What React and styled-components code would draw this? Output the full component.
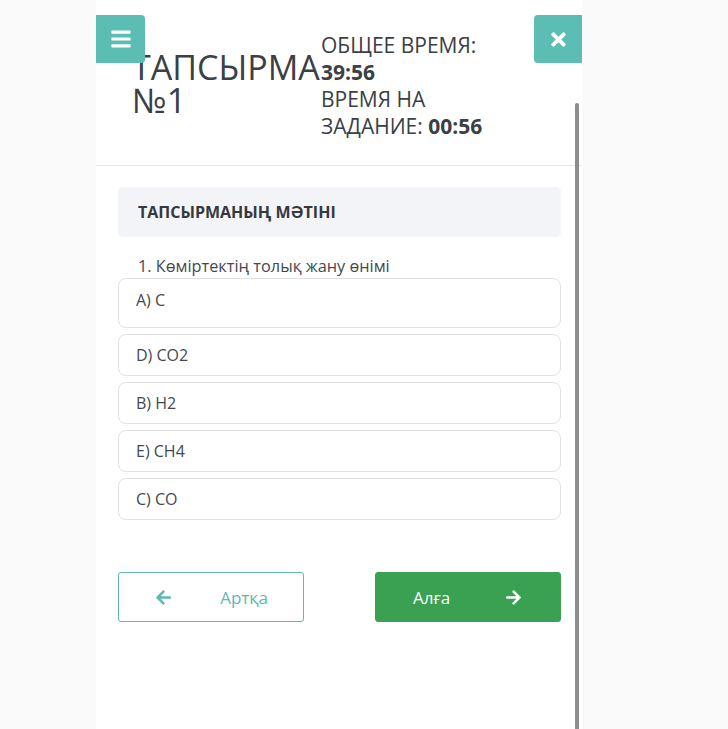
import styled, { createGlobalStyle } from "styled-components";
import { FaBars, FaTimes, FaArrowLeft, FaArrowRight } from "react-icons/fa";

const GlobalStyle = createGlobalStyle`
  body {
    margin: 0;
    background: #fafafa;
    font-family: "Open Sans", "Noto Sans", sans-serif;
    color: #3b4045;
  }
`;

const Panel = styled.div`
  position: relative;
  margin-left: 96px;
  width: 486px;
  min-height: 100vh;
  background: #fff;
`;

const SideButton = styled.button`
  position: absolute;
  top: 15px;
  ${({ $side }) => ($side === "left" ? "left: 0;" : "right: 0;")}
  width: ${({ $side }) => ($side === "left" ? "49px" : "48px")};
  height: 48px;
  border: none;
  border-radius: ${({ $side }) => ($side === "left" ? "0 4px 4px 0" : "4px 0 0 4px")};
  background: #5bbdb4;
  color: #fff;
  display: flex;
  align-items: center;
  justify-content: center;
  padding: 0;
  cursor: pointer;
  z-index: 2;
`;

const Header = styled.header`
  display: flex;
  align-items: flex-start;
  padding: 32px 0 25px 36px;
  border-bottom: 1px solid #e6e6e6;
`;

const Title = styled.h1`
  width: 189px;
  flex-shrink: 0;
  margin: 19px 0 0;
  font-size: 34px;
  line-height: 33px;
  font-weight: 400;
  color: #3b4045;
  white-space: pre-line;
`;

const Timer = styled.div`
  font-size: 21px;
  line-height: 27px;
  color: #3b4045;

  b {
    font-weight: 700;
  }
`;

const Body = styled.main`
  padding: 21px 21px 0 22px;
`;

const SectionHead = styled.div`
  height: 50px;
  display: flex;
  align-items: center;
  padding: 0 20px;
  background: #f3f4f8;
  border-radius: 5px;
  font-size: 16px;
  font-weight: 700;
  color: #35393d;
`;

const Question = styled.p`
  margin: 18px 0 1px;
  padding-left: 20px;
  font-size: 16.3px;
  line-height: 22px;
  color: #45494d;
`;

const Options = styled.div`
  display: flex;
  flex-direction: column;
  gap: 6px;
`;

const Option = styled.label`
  display: block;
  box-sizing: border-box;
  height: ${({ $tall }) => ($tall ? "50px" : "42px")};
  padding: ${({ $tall }) => ($tall ? "10px" : "9px")} 17px 0;
  border: 1px solid #e2e2e2;
  border-radius: 8px;
  font-size: 16px;
  line-height: 22px;
  color: #45494d;
`;

const Nav = styled.div`
  display: flex;
  justify-content: space-between;
  margin-top: 52px;
`;

const NavButton = styled.button`
  width: 186px;
  height: 50px;
  display: flex;
  align-items: center;
  justify-content: space-between;
  padding: 0 ${({ $primary }) => ($primary ? "38px 0 37px" : "35px 0 36px")};
  border-radius: 3px;
  font-family: "Open Sans", sans-serif;
  font-size: 17px;
  cursor: pointer;
  border: 1px solid ${({ $primary }) => ($primary ? "#3aa152" : "#5fb6bb")};
  background: ${({ $primary }) => ($primary ? "#3aa152" : "#fff")};
  color: ${({ $primary }) => ($primary ? "#fff" : "#5bb9b5")};
`;

const ScrollThumb = styled.div`
  position: absolute;
  top: 103px;
  bottom: 0;
  right: 3px;
  width: 4px;
  background: #8c8c8c;
  border-radius: 2px 2px 0 0;
`;

const options = ["A) C", "D) CO2", "B) H2", "E) CH4", "C) CO"];

export default function App() {
  return (
    <>
      <GlobalStyle />
      <Panel>
        <SideButton $side="left" type="button">
          <FaBars size={22} />
        </SideButton>
        <SideButton $side="right" type="button">
          <FaTimes size={21} />
        </SideButton>
        <Header>
          <Title>{"ТАПСЫРМА\n№1"}</Title>
          <Timer>
            ОБЩЕЕ ВРЕМЯ:
            <br />
            <b>39:56</b>
            <br />
            ВРЕМЯ НА
            <br />
            ЗАДАНИЕ: <b>00:56</b>
          </Timer>
        </Header>
        <Body>
          <SectionHead>ТАПСЫРМАНЫҢ МӘТІНІ</SectionHead>
          <Question>1. Көміртектің толық жану өнімі</Question>
          <Options>
            {options.map((o, i) => (
              <Option key={o} $tall={i === 0}>
                {o}
              </Option>
            ))}
          </Options>
          <Nav>
            <NavButton type="button">
              <FaArrowLeft size={17} />
              <span>Артқа</span>
            </NavButton>
            <NavButton type="button" $primary>
              <span>Алға</span>
              <FaArrowRight size={17} />
            </NavButton>
          </Nav>
        </Body>
        <ScrollThumb />
      </Panel>
    </>
  );
}
